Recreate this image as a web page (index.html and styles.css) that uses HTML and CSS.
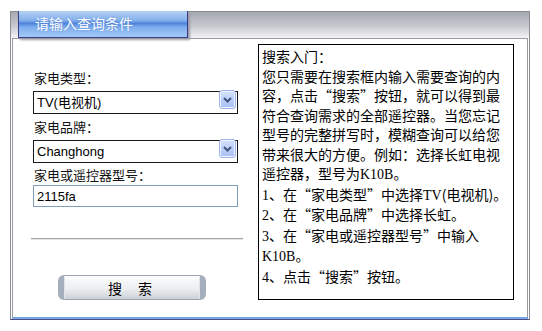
FILE: index.html
```html
<!DOCTYPE html>
<html lang="zh-CN">
<head>
  <meta charset="UTF-8">
  <title>遥控器查询</title>
  <link rel="stylesheet" href="styles.css">
</head>
<body>
<div class="panel">
  <div class="panel-head">
    <div class="tab">请输入查询条件</div>
  </div>
  <div class="panel-body">
    <form class="search-form">
      <label class="field-label">家电类型：</label>
      <div class="select-wrap">
        <select class="field-select">
          <option>TV(电视机)</option>
        </select>
        <span class="select-arrow">
          <svg width="9" height="6" viewBox="0 0 9 6"><polyline points="1,1 4.5,4.5 8,1" fill="none" stroke="#41557a" stroke-width="2"/></svg>
        </span>
      </div>
      <label class="field-label">家电品牌：</label>
      <div class="select-wrap">
        <select class="field-select">
          <option>Changhong</option>
        </select>
        <span class="select-arrow">
          <svg width="9" height="6" viewBox="0 0 9 6"><polyline points="1,1 4.5,4.5 8,1" fill="none" stroke="#41557a" stroke-width="2"/></svg>
        </span>
      </div>
      <label class="field-label">家电或遥控器型号：</label>
      <input class="field-input" type="text" value="2115fa">
      <div class="divider"></div>
      <button type="button" class="search-btn">搜<span class="btn-gap"></span>索</button>
    </form>
    <div class="help">
      搜索入门：<br>
      您只需要在搜索框内输入需要查询的内<br>
      容，点击“搜索”按钮，就可以得到最<br>
      符合查询需求的全部遥控器。当您忘记<br>
      型号的完整拼写时，模糊查询可以给您<br>
      带来很大的方便。例如：选择长虹电视<br>
      遥控器，型号为<span class="en">K10B</span>。<br>
      <span class="en">1</span>、在“家电类型”中选择<span class="en">TV</span>(电视机)。<br>
      <span class="en">2</span>、在“家电品牌”中选择长虹。<br>
      <span class="en">3</span>、在“家电或遥控器型号”中输入<br>
      <span class="en">K10B</span>。<br>
      <span class="en">4</span>、点击“搜索”按钮。
    </div>
  </div>
</div>
</body>
</html>
```

FILE: styles.css
```css
* { margin: 0; padding: 0; box-sizing: border-box; }
body {
  background: #fff; color: #000;
  font-family: "Noto Sans CJK SC", "Liberation Sans", sans-serif;
}
.panel {
  margin: 11px 0 0 10px; width: 520px; height: 309px;
  border: 1px solid #8c8c94; border-bottom-color: #4e4e80;
  display: flex; flex-direction: column;
}
.panel-head {
  height: 26px; flex: none;
  background: linear-gradient(#a4a8b0, #c8cad0 55%, #f4f4f6);
}
.tab {
  margin: -1px 0 0 7px; width: 170px; height: 27px;
  border: 1px solid #3c3c88; border-top: none;
  background: linear-gradient(#b4d0f4, #86b2ec 35%, #4f86dc 48%, #7eaeee 62%, #a4c8f6);
  box-shadow: 2px 2px 2px #9a9aa4;
  color: #fff; font-size: 14px; line-height: 24px;
  padding-left: 16px;
  text-shadow: 0 0 2px #5a8ad8;
}
.panel-body {
  flex: 1; margin: 0 1px;
  border: 1px solid #9a9aa2; border-bottom: 2px solid #74a6ea;
  display: flex; padding: 5px 0 0 18px; gap: 15px;
}
.search-form {
  width: 212px; padding-top: 26px;
  display: flex; flex-direction: column;
}
.field-label {
  font-size: 13px; line-height: 16px; margin-left: 3px; color: #111;
}
.select-wrap {
  position: relative; width: 205px; height: 23px;
  margin: 2px 0 8px 2px;
}
.select-wrap + .field-label + .select-wrap { margin-bottom: 7px; }
.field-select {
  appearance: none; -webkit-appearance: none;
  width: 100%; height: 100%;
  border: 1px solid #1a1a1a; background: #fff; border-radius: 0;
  font-family: "Liberation Sans", "Noto Sans CJK SC", sans-serif;
  font-size: 13px; padding-left: 3px; color: #000; outline: none;
}
.select-arrow {
  position: absolute; right: 2px; top: 2px;
  width: 17px; height: 19px;
  border: 1px solid #9cb4e6; border-radius: 3px;
  background: linear-gradient(#d6e2fd, #bccff9 50%, #a9c0f4);
  box-shadow: inset 0 0 0 1px #eef3ff;
  display: flex; align-items: center; justify-content: center;
}
.field-input {
  width: 205px; height: 22px; margin: 2px 0 0 2px;
  border: 1px solid #7f9db9; outline: none;
  font-family: "Liberation Sans", sans-serif; font-size: 13px;
  padding-left: 3px; color: #000;
}
.divider {
  margin-top: 31px; height: 2px;
  border-top: 1px solid #a4a4a4; border-bottom: 1px solid #e4e4e4;
}
.search-btn {
  margin: 35px 0 0 27px; width: 148px; height: 25px;
  border: 1px solid #9aa4b2; border-left: 6px solid #a4aebc; border-right: 6px solid #a4aebc;
  border-radius: 6px;
  background: linear-gradient(#fdfdfd, #eceef0 55%, #cdd1d6);
  box-shadow: inset 0 1px 0 #fff, inset 1px 0 0 #dfe3e8, inset -1px 0 0 #dfe3e8;
  font-family: "Noto Sans CJK SC", sans-serif; font-size: 14px; color: #000;
  padding-right: 4px;
}
.btn-gap { display: inline-block; width: 16px; }
.help {
  width: 256px; height: 256px;
  border: 1px solid #000;
  padding: 2px 0 0 3px;
  font-size: 14px; line-height: 19.5px; color: #000;
  white-space: nowrap;
}
.help .en { font-family: "Liberation Serif", serif; }
```
